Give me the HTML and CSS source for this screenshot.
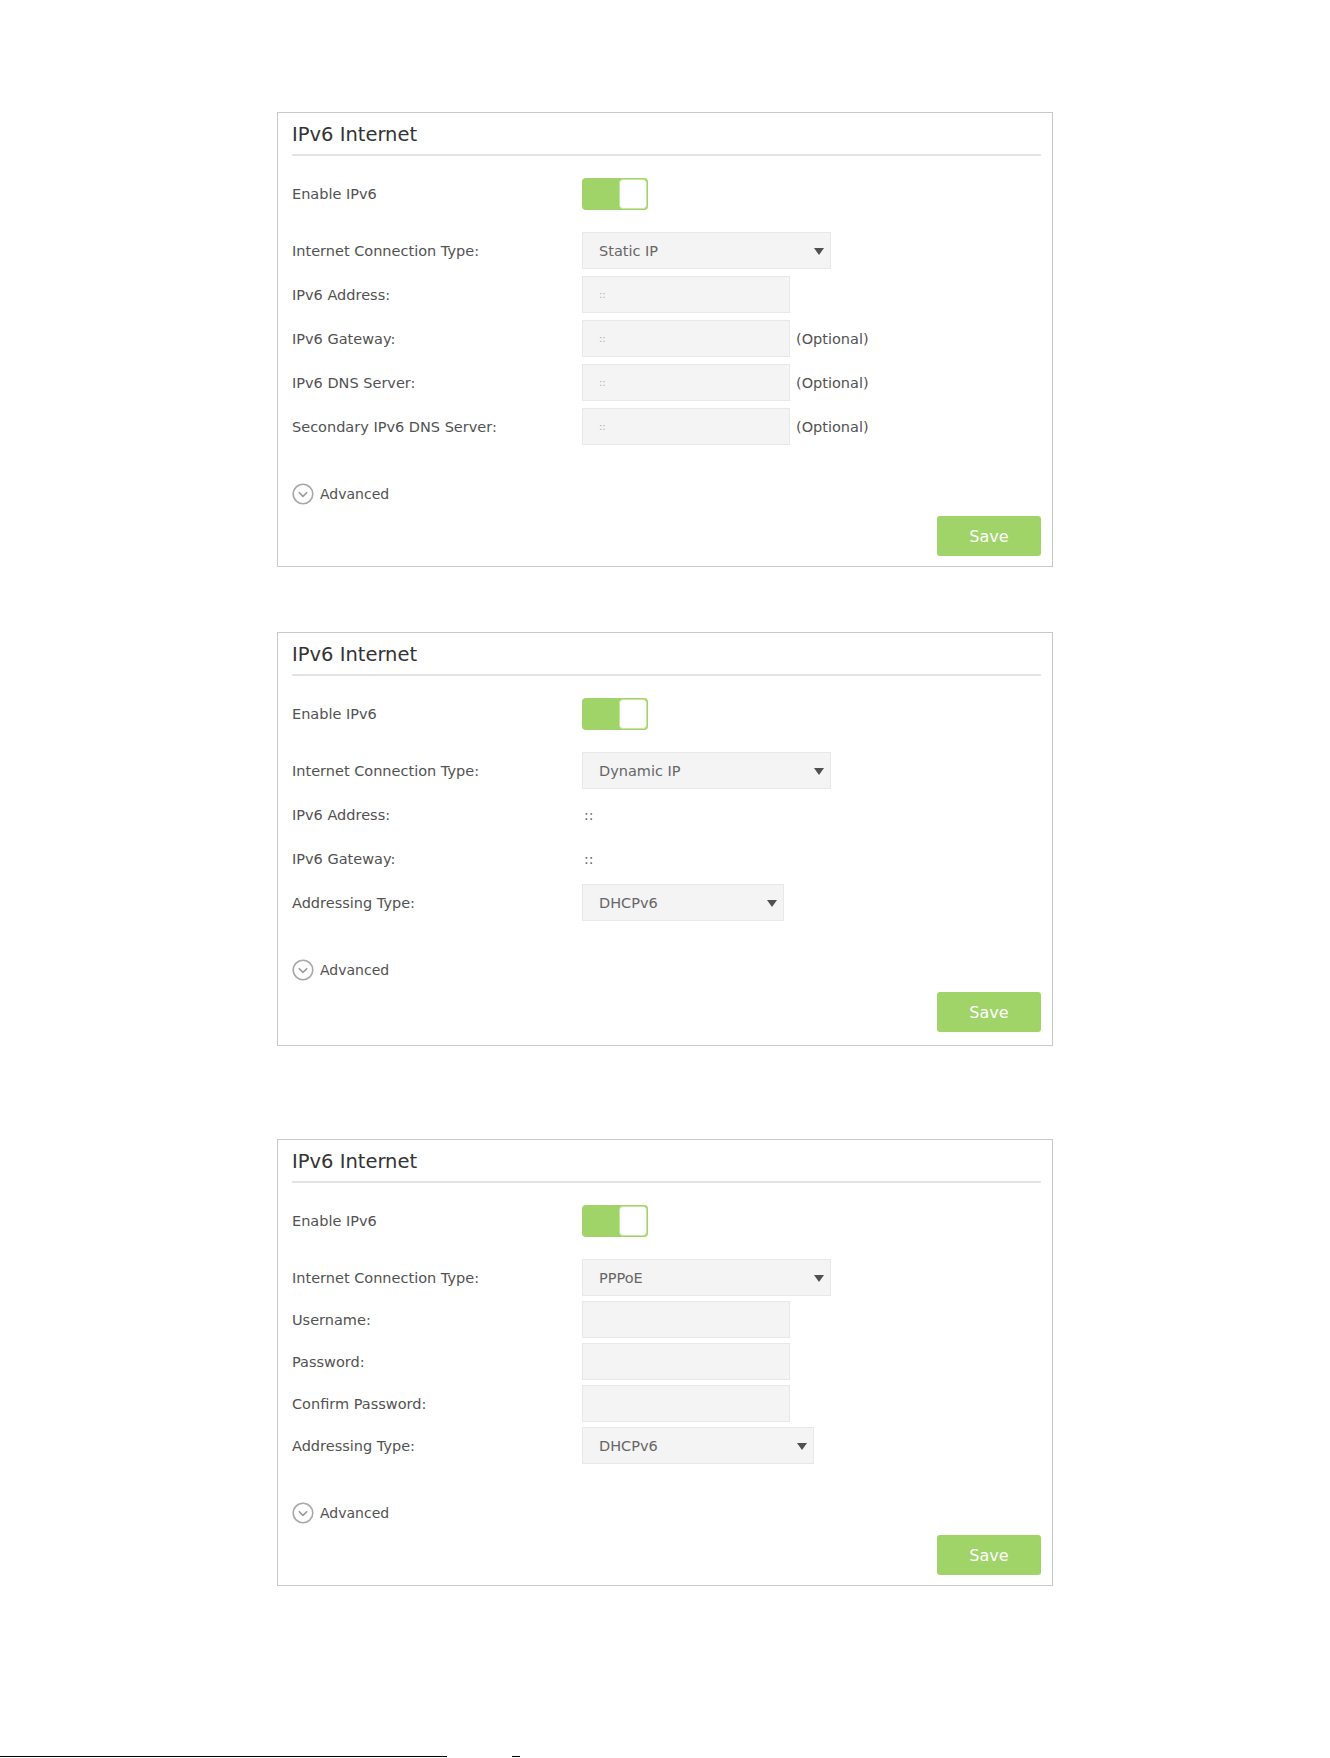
FILE: index.html
```html
<!DOCTYPE html>
<html lang="en">

<head>
    <meta charset="UTF-8">
    <meta name="viewport" content="width=device-width, initial-scale=1.0">
    <title>IPv6 Internet</title>
    <link rel="stylesheet" href="styles.css">
</head>

<body>
    <div class="page">
        <!-- Static IP -->
        <section class="panel">
            <h2 class="panel-title">IPv6 Internet</h2>
            <div class="toggle-row">
                <span class="row-label">Enable IPv6</span>
                <div class="toggle"><span class="knob"></span></div>
            </div>
            <div class="fields">
                <div class="row">
                    <span class="row-label">Internet Connection Type:</span>
                    <div class="select select-wide">Static IP</div>
                </div>
                <div class="row">
                    <span class="row-label">IPv6 Address:</span>
                    <input class="field" type="text" placeholder="::">
                </div>
                <div class="row">
                    <span class="row-label">IPv6 Gateway:</span>
                    <input class="field" type="text" placeholder="::">
                    <span class="hint">(Optional)</span>
                </div>
                <div class="row">
                    <span class="row-label">IPv6 DNS Server:</span>
                    <input class="field" type="text" placeholder="::">
                    <span class="hint">(Optional)</span>
                </div>
                <div class="row">
                    <span class="row-label">Secondary IPv6 DNS Server:</span>
                    <input class="field" type="text" placeholder="::">
                    <span class="hint">(Optional)</span>
                </div>
            </div>
            <div class="advanced">
                <svg width="22" height="22" viewBox="0 0 22 22">
                    <circle cx="11" cy="11" r="9.8" fill="none" stroke="#a8a8a8" stroke-width="1.6" />
                    <polyline points="6.8,9.2 11,13.4 15.2,9.2" fill="none" stroke="#9a9a9a" stroke-width="1.6" />
                </svg>
                <span>Advanced</span>
            </div>
            <div class="actions">
                <button class="btn-save" type="button">Save</button>
            </div>
        </section>

        <!-- Dynamic IP -->
        <section class="panel panel-dynamic">
            <h2 class="panel-title">IPv6 Internet</h2>
            <div class="toggle-row">
                <span class="row-label">Enable IPv6</span>
                <div class="toggle"><span class="knob"></span></div>
            </div>
            <div class="fields">
                <div class="row">
                    <span class="row-label">Internet Connection Type:</span>
                    <div class="select select-wide">Dynamic IP</div>
                </div>
                <div class="row">
                    <span class="row-label">IPv6 Address:</span>
                    <span class="value">::</span>
                </div>
                <div class="row">
                    <span class="row-label">IPv6 Gateway:</span>
                    <span class="value">::</span>
                </div>
                <div class="row">
                    <span class="row-label">Addressing Type:</span>
                    <div class="select select-narrow">DHCPv6</div>
                </div>
            </div>
            <div class="advanced">
                <svg width="22" height="22" viewBox="0 0 22 22">
                    <circle cx="11" cy="11" r="9.8" fill="none" stroke="#a8a8a8" stroke-width="1.6" />
                    <polyline points="6.8,9.2 11,13.4 15.2,9.2" fill="none" stroke="#9a9a9a" stroke-width="1.6" />
                </svg>
                <span>Advanced</span>
            </div>
            <div class="actions">
                <button class="btn-save" type="button">Save</button>
            </div>
        </section>

        <!-- PPPoE -->
        <section class="panel panel-pppoe">
            <h2 class="panel-title">IPv6 Internet</h2>
            <div class="toggle-row">
                <span class="row-label">Enable IPv6</span>
                <div class="toggle"><span class="knob"></span></div>
            </div>
            <div class="fields fields-tight">
                <div class="row">
                    <span class="row-label">Internet Connection Type:</span>
                    <div class="select select-wide">PPPoE</div>
                </div>
                <div class="row">
                    <span class="row-label">Username:</span>
                    <input class="field" type="text">
                </div>
                <div class="row">
                    <span class="row-label">Password:</span>
                    <input class="field" type="password">
                </div>
                <div class="row">
                    <span class="row-label">Confirm Password:</span>
                    <input class="field" type="password">
                </div>
                <div class="row">
                    <span class="row-label">Addressing Type:</span>
                    <div class="select select-mid">DHCPv6</div>
                </div>
            </div>
            <div class="advanced">
                <svg width="22" height="22" viewBox="0 0 22 22">
                    <circle cx="11" cy="11" r="9.8" fill="none" stroke="#a8a8a8" stroke-width="1.6" />
                    <polyline points="6.8,9.2 11,13.4 15.2,9.2" fill="none" stroke="#9a9a9a" stroke-width="1.6" />
                </svg>
                <span>Advanced</span>
            </div>
            <div class="actions">
                <button class="btn-save" type="button">Save</button>
            </div>
        </section>
    </div>

    <div class="doc-rule">
        <span class="rule-long"></span>
        <span class="rule-short"></span>
    </div>
</body>

</html>
```

FILE: styles.css
```css
body {
    margin: 0;
    background-color: #ffffff;
    font-family: "DejaVu Sans", Verdana, sans-serif;
    color: #525252;
}

.page {
    display: flex;
    flex-direction: column;
    align-items: center;
    padding-top: 112px;
}

.panel {
    width: 776px;
    box-sizing: border-box;
    border: 1px solid #c9c9c9;
    padding: 10px 11px 10px 14px;
}

.panel + .panel {
    margin-top: 65px;
}

.panel-dynamic {
    padding-bottom: 13px;
}

.panel + .panel-pppoe {
    margin-top: 93px;
}

.panel-title {
    margin: 0;
    padding-bottom: 7px;
    font-size: 19.5px;
    font-weight: normal;
    line-height: 24px;
    color: #333333;
    border-bottom: 2px solid #e3e3e3;
}

.row-label {
    width: 290px;
    flex-shrink: 0;
    font-size: 14.5px;
}

.toggle-row {
    display: flex;
    align-items: center;
    height: 32px;
    margin-top: 22px;
}

.toggle {
    width: 66px;
    height: 32px;
    box-sizing: border-box;
    display: flex;
    justify-content: flex-end;
    align-items: center;
    background-color: #a0d468;
    border-radius: 4px;
    padding: 1px;
}

.knob {
    width: 28px;
    height: 30px;
    box-sizing: border-box;
    background-color: #ffffff;
    border: 1px solid #c6e6a4;
    border-radius: 4px;
}

.fields {
    display: flex;
    flex-direction: column;
    gap: 7px;
    margin-top: 22px;
}

.fields-tight {
    gap: 5px;
}

.row {
    display: flex;
    align-items: center;
    height: 37px;
}

.select {
    position: relative;
    height: 37px;
    box-sizing: border-box;
    display: flex;
    align-items: center;
    padding-left: 16px;
    background-color: #f4f4f4;
    border: 1px solid #e8e8e8;
    font-size: 14.5px;
    color: #666666;
}

/* dropdown arrow */
.select::after {
    content: "";
    position: absolute;
    right: 6px;
    top: 15px;
    border-left: 5.5px solid transparent;
    border-right: 5.5px solid transparent;
    border-top: 7px solid #505050;
}

.select-wide {
    width: 249px;
}

.select-mid {
    width: 232px;
}

.select-narrow {
    width: 202px;
}

.field {
    width: 208px;
    height: 37px;
    box-sizing: border-box;
    margin: 0;
    padding: 0 16px;
    background-color: #f4f4f4;
    border: 1px solid #e8e8e8;
    border-radius: 0;
    font-family: "DejaVu Sans", Verdana, sans-serif;
    font-size: 10px;
    color: #666666;
}

.field::placeholder {
    color: #b0b0b0;
}

.hint {
    margin-left: 6px;
    font-size: 14.5px;
}

.value {
    padding-left: 2px;
    font-size: 14px;
    color: #666666;
}

.advanced {
    display: flex;
    align-items: center;
    gap: 6px;
    height: 22px;
    margin-top: 38px;
    font-size: 14px;
}

.advanced svg {
    display: block;
}

.actions {
    display: flex;
    justify-content: flex-end;
    margin-top: 11px;
}

.btn-save {
    width: 104px;
    height: 40px;
    background-color: #a0d468;
    border: none;
    border-radius: 3px;
    color: #ffffff;
    font-family: "DejaVu Sans", Verdana, sans-serif;
    font-size: 16px;
    cursor: pointer;
}

.doc-rule {
    display: flex;
    gap: 65px;
    margin-top: 170px;
}

.rule-long {
    width: 447px;
    border-top: 1px solid #000000;
}

.rule-short {
    width: 8px;
    border-top: 1px solid #000000;
}
```
